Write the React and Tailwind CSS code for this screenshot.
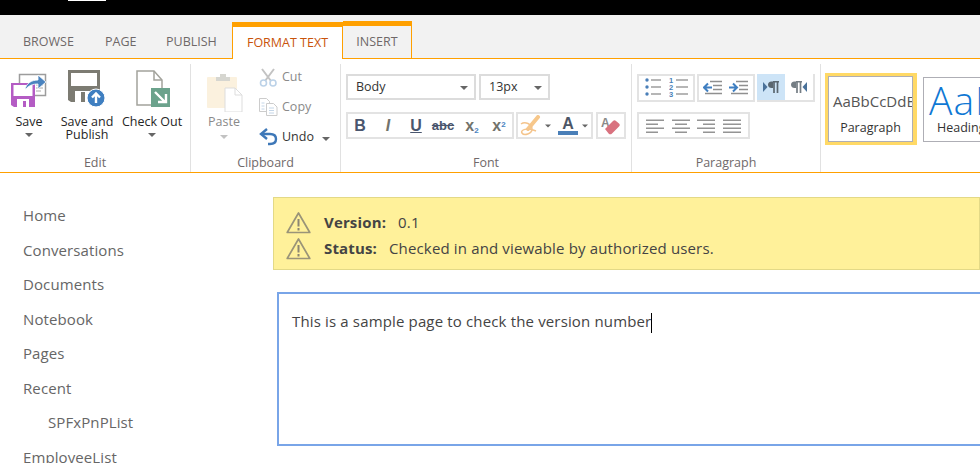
import React from "react";

function Caret({ className = "" }) {
  return <span className={"inline-block w-0 h-0 border-x-[4px] border-x-transparent border-t-[4px] border-t-[#666] " + className} />;
}

function SaveIcon() {
  return (
    <svg width="36" height="36" viewBox="0 0 36 36">
      <rect x="8.500" y="2.500" width="26" height="21" fill="#fff" stroke="#9c9c9c" strokeWidth="1.500" />
      <path d="M25 13h7M25 16h7M25 19h5" stroke="#aaa" />
      <path d="M0 11h24v24H3l-3-2z" fill="#b45cc4" />
      <rect x="2.500" y="13" width="19" height="11" fill="#fff" />
      <rect x="6" y="27" width="12" height="8" fill="#fff" />
      <rect x="12" y="29" width="3" height="6" fill="#b45cc4" />
      <path d="M14 18c1-7 7-10 13-10V3l8 7-8 7v-5c-5 0-9 1-13 6z" fill="#4a83bf" stroke="#fff" strokeWidth="0.800" />
    </svg>
  );
}

function PublishIcon() {
  return (
    <svg width="38" height="38" viewBox="0 0 38 38">
      <path d="M0 0h32v32H3l-3-2z" fill="#7c7b72" />
      <rect x="3" y="3" width="26" height="13" fill="#fff" />
      <rect x="7" y="21" width="17" height="11" fill="#fff" />
      <rect x="13" y="22" width="4" height="10" fill="#7c7b72" />
      <circle cx="28" cy="28" r="9" fill="#3f7fc1" stroke="#fff" />
      <path d="M28 33v-9M24 27.500l4-4 4 4" stroke="#fff" strokeWidth="2.400" fill="none" />
    </svg>
  );
}

function CheckOutIcon() {
  return (
    <svg width="36" height="38" viewBox="0 0 36 38">
      <path d="M1 1h17l8 9v25H1z" fill="#fff" stroke="#a3a39c" strokeWidth="1.500" />
      <path d="M18 1v9h8" fill="none" stroke="#a3a39c" strokeWidth="1.500" />
      <rect x="15" y="18" width="19" height="19" fill="#6ba28c" />
      <path d="M19 22l10 10M30 24v8h-8" stroke="#fff" strokeWidth="2.400" fill="none" />
    </svg>
  );
}

function PasteIcon() {
  return (
    <svg width="36" height="40" viewBox="0 0 36 40">
      <rect x="0" y="5" width="30" height="31" rx="1" fill="#fbf1de" />
      <path d="M9 5h4V2h6v3h4v4H9z" fill="#d6d6d0" />
      <path d="M18 16h10l7 7v17H18z" fill="#fff" stroke="#ddd" />
      <path d="M28 16v7h7" fill="none" stroke="#ddd" />
    </svg>
  );
}

function CutIcon() {
  return (
    <svg width="19" height="19" viewBox="0 0 19 19">
      <path d="M3 1l9 12M15 1L6 13" stroke="#c3c3c3" strokeWidth="2" fill="none" />
      <circle cx="4.500" cy="15" r="3" fill="none" stroke="#bcd2e8" strokeWidth="1.600" />
      <circle cx="14" cy="15" r="3" fill="none" stroke="#bcd2e8" strokeWidth="1.600" />
    </svg>
  );
}

function CopyIcon() {
  return (
    <svg width="19" height="18" viewBox="0 0 19 18">
      <path d="M.5.5h7l3 3v10H.5z" fill="#fff" stroke="#ccc" />
      <path d="M7.500 5.500h7l3.500 3.500v8.500H7.500z" fill="#fff" stroke="#ccc" />
      <path d="M2.500 5h3M2.500 8h3M2.500 11h3M10 10h5M10 12.500h5M10 15h5" stroke="#c4d6e8" />
    </svg>
  );
}

function UndoIcon() {
  return (
    <svg width="19" height="18" viewBox="0 0 19 18">
      <path d="M8 1L2 6l6 5" fill="none" stroke="#3e78b8" strokeWidth="2.400" />
      <path d="M3 6h8c4 0 6 2 6 5s-2 5-6 5H9" fill="none" stroke="#3e78b8" strokeWidth="2.400" />
    </svg>
  );
}

function HighlightIcon() {
  return (
    <svg width="22" height="21" viewBox="0 0 22 21">
      <path d="M8 14L18 2" stroke="#f7c78a" strokeWidth="4" strokeLinecap="round" />
      <path d="M1 9c4-3 11 0 11 5 0 5-8 7-10 4-2-3 5-6 14-2" fill="none" stroke="#f4c48c" strokeWidth="1.500" />
    </svg>
  );
}

function EraserIcon() {
  return (
    <svg width="20" height="20" viewBox="0 0 20 20">
      <text x="0" y="11" fontSize="12" fontWeight="700" fill="#8a8a8a" fontFamily="Liberation Sans, sans-serif">A</text>
      <path d="M4 13l8-8c1-1 2-1 3 0l3 2.500c1 1 1 2 0 3l-7 7c-1 1-2 1-3 .5z" fill="#d9727f" />
    </svg>
  );
}

function ListLines({ dots, numbers }) {
  return (
    <svg width="19" height="20" viewBox="0 0 19 20">
      {[2, 9, 16].map((y, i) => (
        <g key={y}>
          {dots && <circle cx="2" cy={y} r="1.700" fill="#4a7fb8" />}
          {numbers && <text x="0" y={y + 3} fontSize="7.500" fontWeight="700" fill="#4a7fb8" fontFamily="Liberation Sans, sans-serif">{i + 1}</text>}
          <path d={`M${numbers ? 7 : 6} ${y}h${numbers ? 12 : 10}`} stroke="#8f8f8f" strokeWidth="1.300" />
        </g>
      ))}
    </svg>
  );
}

function IndentIcon({ flip }) {
  return (
    <svg width="20" height="16" viewBox="0 0 20 16">
      <path d="M7 1.500h12M10 5.500h9M10 9.500h9M2 13.500h17" stroke="#8f8f8f" strokeWidth="1.300" />
      {flip ? (
        <path d="M0 7.500h7M4 3.500l4 4-4 4" stroke="#3f7fc1" strokeWidth="2" fill="none" />
      ) : (
        <path d="M9 7.500H1M5 3.500l-4 4 4 4" stroke="#3f7fc1" strokeWidth="2" fill="none" />
      )}
    </svg>
  );
}

function DirIcon({ rtl }) {
  const stroke = rtl ? "#747d84" : "#5b6770";
  return (
    <svg width="16" height="12" viewBox="0 0 16 12">
      {rtl ? (
        <>
          <path d="M0 4a3.500 3.500 0 0 1 3.500-3.500H5V7H3.500A3.500 3.500 0 0 1 0 4z" fill={stroke} />
          <path d="M5 .75h6M6 1v11M9.500 1v11" stroke={stroke} strokeWidth="1.700" />
          <path d="M16 1v10l-4.500-5z" fill="#4a7199" />
        </>
      ) : (
        <>
          <path d="M0 1v10l4.500-5z" fill="#4a7199" />
          <path d="M5 4a3.500 3.500 0 0 1 3.500-3.500H10V7H8.500A3.500 3.500 0 0 1 5 4z" fill={stroke} />
          <path d="M10 .75h6M11 1v11M14.500 1v11" stroke={stroke} strokeWidth="1.700" />
        </>
      )}
    </svg>
  );
}

function AlignIcon({ kind }) {
  const rows = {
    left: [[0, 18], [0, 12], [0, 18], [0, 12]],
    center: [[0, 18], [3, 12], [0, 18], [3, 12]],
    right: [[0, 18], [6, 12], [0, 18], [6, 12]],
    justify: [[0, 18], [0, 18], [0, 18], [0, 18]],
  }[kind];
  return (
    <svg width="18" height="14" viewBox="0 0 18 14">
      {rows.map(([x, w], i) => (
        <rect key={i} x={x} y={i * 4 + 0.500} width={w} height="1.500" fill="#949494" />
      ))}
    </svg>
  );
}

function WarnIcon() {
  return (
    <svg width="25" height="23" viewBox="0 0 25 23">
      <path d="M12.500 2L1.200 21.500h22.600z" fill="none" stroke="#9a9478" strokeWidth="1.700" strokeLinejoin="round" />
      <path d="M12.500 8v7.500M12.500 17v2.500" stroke="#8b8672" strokeWidth="2" />
    </svg>
  );
}

function LargeButton({ icon, label, caret, className = "" }) {
  return (
    <div className={"flex flex-col items-center " + className}>
      <div className="h-[40px] flex items-end">{icon}</div>
      <div className="mt-[7px] text-[12.500px] leading-[13px] text-[#262626] text-center whitespace-pre-line">{label}</div>
      {caret && <Caret className="mt-[5px]" />}
    </div>
  );
}

function SmallClipButton({ icon, label, muted, caret }) {
  return (
    <div className="flex items-center h-[30px]">
      <div className="w-[22px] flex justify-center">{icon}</div>
      <span className={"ml-[3px] text-[12.500px] " + (muted ? "text-[#8a8a8a]" : "text-[#333]")}>{label}</span>
      {caret && <Caret className="ml-[8px] mt-[3px]" />}
    </div>
  );
}

function Group({ label, className, children }) {
  return (
    <div className={"flex flex-col shrink-0 border-r border-[#e1e1e1] mt-[5px] h-[108px] " + className}>
      <div className="h-[90px]">{children}</div>
      <div className="text-center text-[12.500px] leading-[18px] text-[#70696a]">{label}</div>
    </div>
  );
}

function IconBox({ className = "", children }) {
  return <div className={"flex items-center border-2 border-[#e3e3e3] bg-white " + className}>{children}</div>;
}

function Glyph({ className, children }) {
  return <span className={"flex justify-center font-['Liberation_Sans'] " + className}>{children}</span>;
}

const navItems = ["Home", "Conversations", "Documents", "Notebook", "Pages", "Recent"];

export default function App() {
  return (
    <div className="w-[980px] h-[463px] overflow-hidden bg-white font-['Open_Sans',sans-serif]">
      <div className="h-[15px] bg-black">
        <div className="ml-[68px] w-[38px] h-[1px] bg-white" />
      </div>

      {/* tabs */}
      <div className="h-[44px] bg-[#f2f2f2] border-b border-[#ffa000] flex items-end text-[12.500px] text-[#6e6868]">
        <div className="w-[232px] flex pl-[23px] pb-[6px]">
          <span className="w-[82px]">BROWSE</span>
          <span className="w-[61px]">PAGE</span>
          <span>PUBLISH</span>
        </div>
        <div className="w-[111px] h-[37px] mb-[-1px] bg-white border-t-[5px] border-x border-[#ffa000] flex items-center justify-center text-[#c9540b]">FORMAT TEXT</div>
        <div className="w-[69px] h-[37px] border-t-[5px] border-r border-[#ffa000] flex items-center justify-center">INSERT</div>
      </div>

      {/* ribbon */}
      <div className="h-[114px] border-b border-[#ffa000] flex">
        <Group label="Edit" className="w-[191px]">
          <div className="flex pt-[4px]">
            <LargeButton className="w-[40px] ml-[9px]" icon={<SaveIcon />} label="Save" caret />
            <LargeButton className="w-[60px] ml-[8px]" icon={<PublishIcon />} label={"Save and\nPublish"} />
            <LargeButton className="w-[62px] ml-[4px]" icon={<div className="ml-[4px]"><CheckOutIcon /></div>} label="Check Out" caret />
          </div>
        </Group>

        <Group label="Clipboard" className="w-[150px]">
          <div className="flex">
            <div className="w-[66px] pt-[8px] flex flex-col items-center">
              <div className="ml-[2px] h-[40px]"><PasteIcon /></div>
              <div className="mt-[2px] text-[12.500px] leading-[16px] text-[#8a8a8a]">Paste</div>
              <Caret className="mt-[5px] opacity-40" />
            </div>
            <div className="-mt-[2px]">
              <SmallClipButton icon={<CutIcon />} label="Cut" muted />
              <SmallClipButton icon={<CopyIcon />} label="Copy" muted />
              <SmallClipButton icon={<UndoIcon />} label="Undo" caret />
            </div>
          </div>
        </Group>

        <Group label="Font" className="w-[291px]">
          <div className="pl-[5px] pt-[10px]">
            <div className="flex gap-[3px]">
              <div className="w-[130px] h-[26px] border-2 border-[#dcdcdc] flex items-center justify-between pl-[8px] pr-[6px] pt-[1px] text-[12.500px] text-[#333]">
                Body <Caret />
              </div>
              <div className="w-[71px] h-[26px] border-2 border-[#dcdcdc] flex items-center justify-between pl-[8px] pr-[6px] pt-[1px] text-[12.500px] text-[#333]">
                13px <Caret />
              </div>
            </div>
            <div className="flex gap-[2px] mt-[12px]">
              <IconBox className="w-[168px] h-[27px] text-[#4a566e]">
                <Glyph className="w-[24px] font-bold text-[16px]">B</Glyph>
                <Glyph className="w-[32px] font-bold italic text-[16px] text-[#72736c]">I</Glyph>
                <Glyph className="w-[24px] font-bold text-[16px] underline">U</Glyph>
                <Glyph className="w-[30px] font-bold text-[13px] line-through">abc</Glyph>
                <Glyph className="w-[28px] font-bold text-[16px] text-[#72736c]"><span>x<sub className="text-[8px] text-[#4a83bf]">2</sub></span></Glyph>
                <Glyph className="w-[26px] font-bold text-[16px] text-[#72736c]"><span>x<sup className="text-[8px] text-[#4a83bf]">2</sup></span></Glyph>
              </IconBox>
              <IconBox className="w-[77px] h-[27px] pl-[2px]">
                <HighlightIcon />
                <Caret className="ml-[2px] scale-75" />
                <div className="ml-[6px] w-[20px] flex flex-col items-center">
                  <span className="font-['Liberation_Sans'] font-bold text-[16px] leading-[15px] text-[#4d5666]">A</span>
                  <span className="w-[20px] h-[4px] bg-[#4a7fb8]" />
                </div>
                <Caret className="ml-[3px] scale-75" />
              </IconBox>
              <IconBox className="w-[30px] h-[27px] ml-[1px] justify-center">
                <EraserIcon />
              </IconBox>
            </div>
          </div>
        </Group>

        <Group label="Paragraph" className="w-[189px]">
          <div className="pl-[5px] pt-[10px]">
            <div className="flex gap-[2px]">
              <IconBox className="w-[58px] h-[28px] justify-around px-[3px]">
                <ListLines dots />
                <ListLines numbers />
              </IconBox>
              <IconBox className="w-[58px] h-[28px] justify-around px-[1px]">
                <IndentIcon />
                <IndentIcon flip />
              </IconBox>
              <IconBox className="w-[58px] h-[28px] border-l-0 border-t-0">
                <div className="w-[28px] h-[26px] bg-[#cde4f7] flex items-center justify-center"><DirIcon /></div>
                <div className="w-[28px] flex justify-center"><DirIcon rtl /></div>
              </IconBox>
            </div>
            <IconBox className="w-[113px] h-[27px] mt-[10px] justify-around px-[3px]">
              <AlignIcon kind="left" />
              <AlignIcon kind="center" />
              <AlignIcon kind="right" />
              <AlignIcon kind="justify" />
            </IconBox>
          </div>
        </Group>

        <div className="flex gap-[6px] pt-[14px] pl-[4px] shrink-0">
          <div className="w-[92px] h-[72px] border-[3px] border-r-[4px] border-[#ffd966]">
            <div className="h-full border border-[#aeaeb5] flex flex-col items-center overflow-hidden">
              <div className="w-full pl-[4px] mt-[14px] text-[15px] leading-[20px] text-[#555] whitespace-nowrap overflow-hidden">AaBbCcDdE</div>
              <div className="mt-[10px] text-[12.500px] leading-[14px] text-[#333]">Paragraph</div>
            </div>
          </div>
          <div className="w-[92px] h-[65px] mt-[4px] border border-[#aeaeb5] pl-[5px] overflow-hidden whitespace-nowrap">
            <div className="text-[39px] leading-[40px] mt-[2px] font-light tracking-[1px] text-[#0f78d4]">AaB</div>
            <div className="text-[12.500px] leading-[14px] text-[#333] pl-[8px] mt-[1px]">Heading</div>
          </div>
        </div>
      </div>

      {/* page */}
      <div className="flex">
        <nav className="w-[273px] shrink-0 pl-[23px] pt-[25px] text-[15px] tracking-[0.1px] text-[#666]">
          {navItems.map((item) => (
            <div key={item} className="h-[34.500px] leading-[34.500px]">{item}</div>
          ))}
          <div className="h-[34.500px] leading-[34.500px] pl-[25px]">SPFxPnPList</div>
          <div className="h-[34.500px] leading-[34.500px]">EmployeeList</div>
        </nav>

        <div className="flex-1 pt-[24px] min-w-0">
          <div className="h-[73px] bg-[#fff19a] border border-[#e3d987] pl-[12px] pt-[11px] text-[15px] tracking-[0.15px] text-[#444]">
            <div className="flex items-center h-[26px]">
              <WarnIcon />
              <strong className="ml-[13px] font-bold">Version:</strong>
              <span className="ml-[12px]">0.1</span>
            </div>
            <div className="flex items-center h-[26px]">
              <WarnIcon />
              <strong className="ml-[13px] font-bold">Status:</strong>
              <span className="ml-[12px]">Checked in and viewable by authorized users.</span>
            </div>
          </div>

          <div className="ml-[4px] mt-[22px] h-[154px] w-[720px] border-2 border-[#79a5e8] pl-[13px] pt-[14px] text-[15px] tracking-[0.15px] leading-[26px] text-[#444]">
            This is a sample page to check the version number<span className="inline-block w-[1px] h-[20px] bg-black align-middle" />
          </div>
        </div>
      </div>
    </div>
  );
}
